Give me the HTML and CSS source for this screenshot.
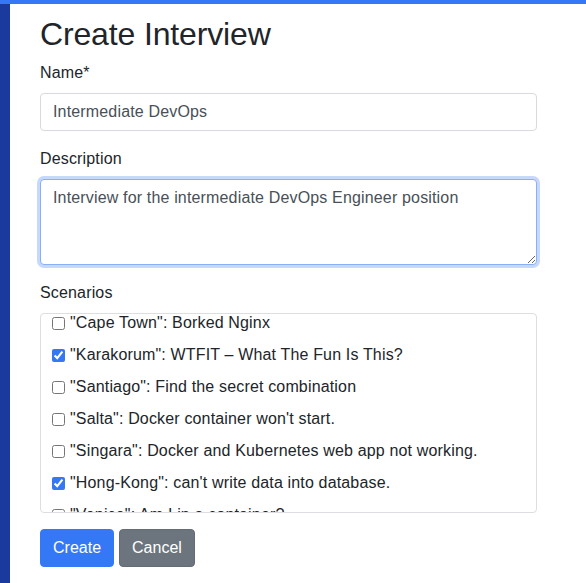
FILE: index.html
```html
<!DOCTYPE html>
<html lang="en">
<head>
<meta charset="utf-8">
<title>Create Interview</title>
<link rel="stylesheet" href="styles.css">
</head>
<body>
<div class="topbar"></div>
<div class="layout">
  <aside class="sidebar"></aside>
  <main class="main">
    <h2 class="title">Create Interview</h2>
    <form class="form">
      <div class="form-group">
        <label class="label" for="name">Name*</label>
        <input class="control" id="name" type="text" value="Intermediate DevOps">
      </div>
      <div class="form-group">
        <label class="label" for="desc">Description</label>
        <textarea class="control textarea is-focused" id="desc" rows="3">Interview for the intermediate DevOps Engineer position</textarea>
      </div>
      <div class="form-group">
        <div class="label">Scenarios</div>
        <div class="scenarios" id="scenarios">
          <label class="item"><input class="check" type="checkbox"><span>"Cape Town": Borked Nginx</span></label>
          <label class="item"><input class="check" type="checkbox" checked><span>"Karakorum": WTFIT – What The Fun Is This?</span></label>
          <label class="item"><input class="check" type="checkbox"><span>"Santiago": Find the secret combination</span></label>
          <label class="item"><input class="check" type="checkbox"><span>"Salta": Docker container won't start.</span></label>
          <label class="item"><input class="check" type="checkbox"><span>"Singara": Docker and Kubernetes web app not working.</span></label>
          <label class="item"><input class="check" type="checkbox" checked><span>"Hong-Kong": can't write data into database.</span></label>
          <label class="item"><input class="check" type="checkbox"><span>"Venice": Am I in a container?</span></label>
        </div>
      </div>
      <div class="actions">
        <button type="button" class="btn btn-primary">Create</button>
        <button type="button" class="btn btn-secondary">Cancel</button>
      </div>
    </form>
  </main>
</div>
<script src="script.js"></script>
</body>
</html>
```

FILE: styles.css
```css
* { box-sizing: border-box; }
html, body {
  margin: 0;
  padding: 0;
  background: #ffffff;
}
body {
  font-family: "Liberation Sans", Arial, Helvetica, sans-serif;
  font-size: 16px;
  line-height: 1.5;
  color: #212529;
  height: 583px;
  overflow: hidden;
  letter-spacing: 0.16px;
}
.topbar {
  height: 4px;
  background: #3478f6;
}
.layout {
  display: flex;
  min-height: 579px;
}
.sidebar {
  width: 10px;
  flex: 0 0 10px;
  background: #1b3a9e;
}
.main {
  flex: 1;
  padding: 11px 49px 0 30px;
}
.title {
  margin: 0 0 8px;
  font-size: 32px;
  font-weight: 500;
  line-height: 1.2;
  letter-spacing: -0.15px;
  color: #212529;
}
.form { margin: 0; }
.form-group { margin-bottom: 16px; }
.label {
  display: block;
  margin-bottom: 8px;
}
.control {
  display: block;
  width: 100%;
  height: 38px;
  padding: 6px 12px;
  font-family: inherit;
  font-size: 16px;
  line-height: 1.5;
  letter-spacing: 0.16px;
  color: #495057;
  background: #fff;
  border: 1px solid #d8dadf;
  border-radius: 4px;
  outline: none;
}
.textarea {
  height: 86px;
  resize: vertical;
}
.is-focused {
  border-color: #86b1f9;
  box-shadow: 0 0 0 3px rgba(52, 120, 246, 0.28);
}
.scenarios {
  height: 200px;
  overflow-y: auto;
  scrollbar-width: none;
  border: 1px solid #dcdee2;
  border-radius: 4px;
  padding: 0 11px;
}
.scenarios::-webkit-scrollbar { display: none; }
.item {
  display: flex;
  align-items: center;
  padding: 4px 0;
  white-space: nowrap;
}
.check {
  width: 13px;
  height: 13px;
  margin: 0 5px 0 0;
  accent-color: #3478f6;
  flex: 0 0 13px;
}
.actions {
  display: flex;
  gap: 5px;
}
.btn {
  font-family: inherit;
  font-size: 16px;
  line-height: 1.5;
  letter-spacing: 0;
  padding: 6px 12px;
  border: 1px solid transparent;
  border-radius: 4px;
  color: #fff;
  cursor: pointer;
}
.btn-primary {
  background: #3478f6;
  border-color: #3478f6;
}
.btn-secondary {
  background: #6c757d;
  border-color: #646c74;
}
```

FILE: script.js
```js
document.getElementById('scenarios').scrollTop = 7;
```
